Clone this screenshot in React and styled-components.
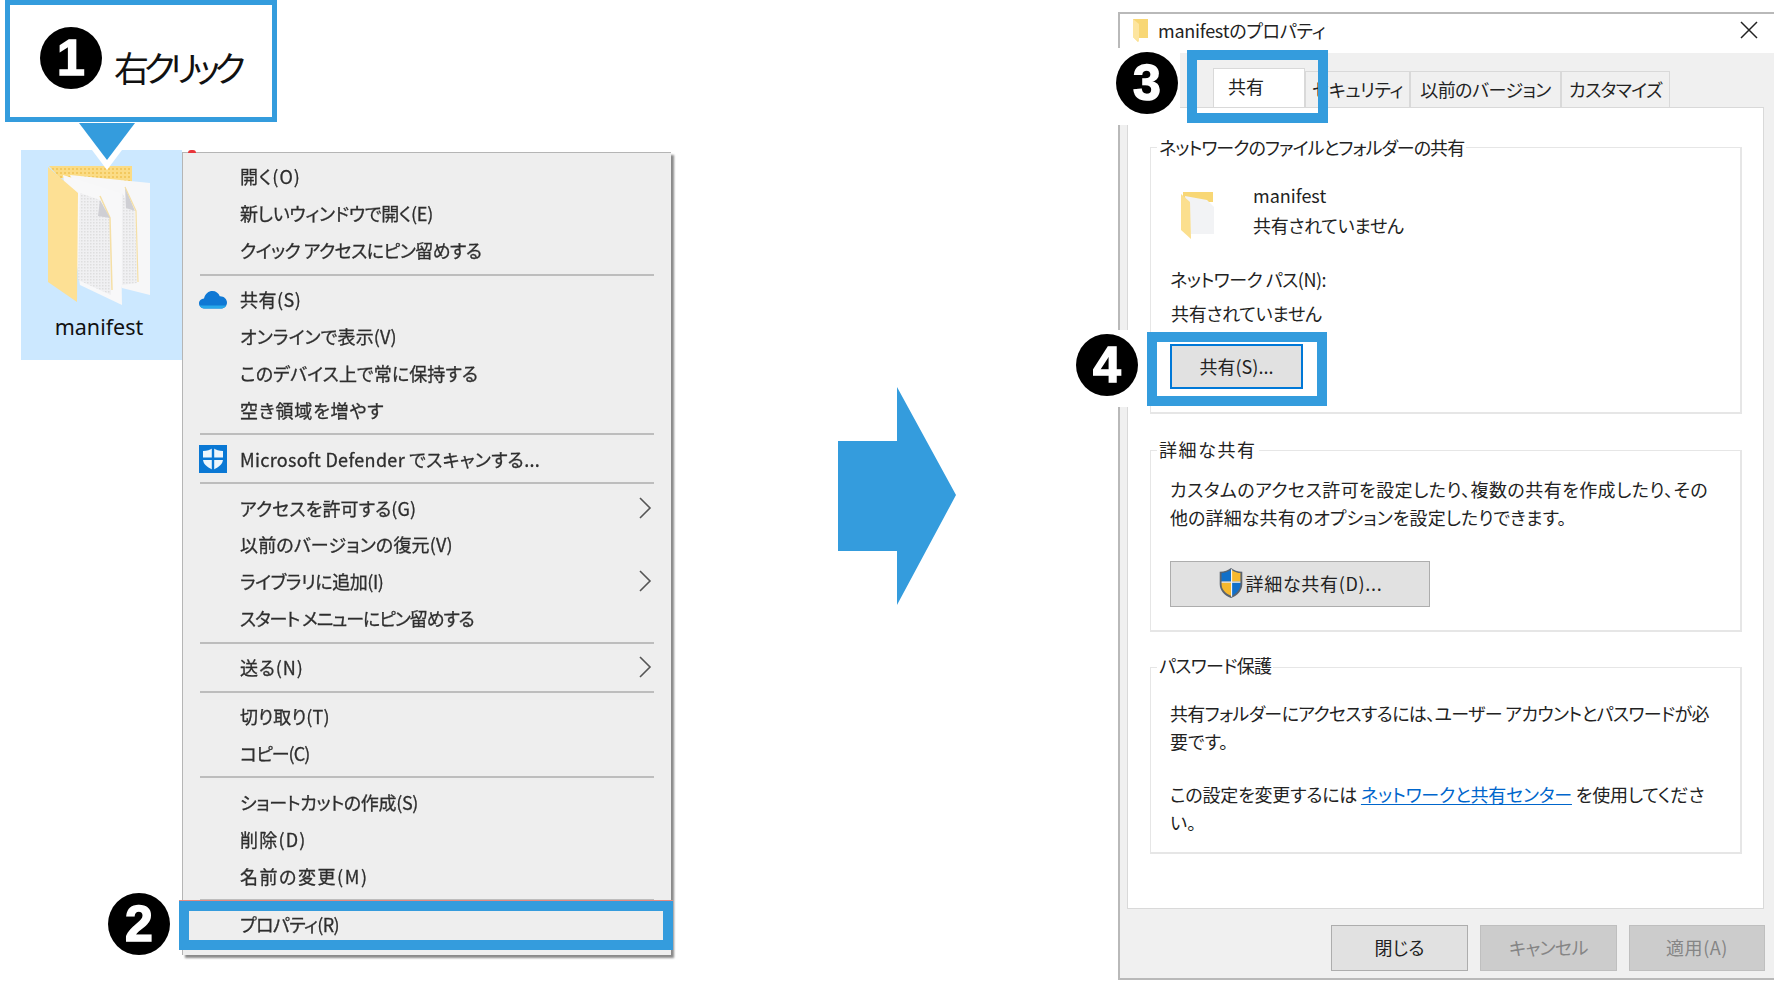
import React from "react";
import styled, { createGlobalStyle } from "styled-components";

const BLUE = "#349cdd";
const FONT = `"Noto Sans CJK JP", "Noto Sans", sans-serif`;

const Global = createGlobalStyle`
  html, body { margin: 0; padding: 0; background: #fff; }
  body { font-family: ${FONT}; font-feature-settings: "palt"; overflow: hidden; }
`;

const Page = styled.div`
  display: flex;
  align-items: flex-start;
  width: 1774px;
  height: 1004px;
  background: #fff;
  overflow: hidden;
`;
const LeftPanel = styled.section`
  position: relative;
  width: 838px;
  flex: none;
`;
const Callout = styled.div`
  box-sizing: border-box;
  display: flex;
  align-items: flex-start;
  margin-left: 5px;
  width: 272px;
  height: 122px;
  border: 5px solid ${BLUE};
  background: #fff;
`;
const CalloutText = styled.span`
  margin: 37px 0 0 104px;
  font-size: 35px;
  line-height: 50px;
  letter-spacing: -5.6px;
  color: #111;
  white-space: nowrap;
`;
const Badge = styled.div`
  position: absolute;
  left: ${(p) => p.$x}px;
  top: ${(p) => p.$y}px;
  z-index: 6;
  display: flex;
  align-items: center;
  justify-content: center;
  width: 62px;
  height: 62px;
  border-radius: 50%;
  background: #000;
  color: #fff;
  font: 700 50px/1 "Liberation Sans", Arial, sans-serif;
  -webkit-text-stroke: 1.5px #fff;
`;
const Pointer = styled.svg`
  position: absolute;
  left: 71px;
  top: 122px;
  z-index: 4;
`;
const Explorer = styled.div`
  display: flex;
  align-items: flex-start;
  margin: 28px 0 0 21px;
`;
const Tile = styled.div`
  position: relative;
  flex: none;
  box-sizing: border-box;
  width: 161px;
  height: 210px;
  background: #cce8ff;
`;
const TileIcon = styled.svg`
  display: block;
`;
const TileLabel = styled.div`
  margin-top: 2px;
  padding-right: 5px;
  text-align: center;
  font: 400 21.5px/30px "Noto Sans", sans-serif;
  color: #111;
`;
const Menu = styled.nav`
  position: relative;
  box-sizing: border-box;
  flex: none;
  width: 489px;
  height: 803px;
  margin-top: 2px;
  padding: 5px 0 0;
  background: #eee;
  border-top: 1px solid #b5b5b5;
  border-left: 1px solid #b5b5b5;
  box-shadow: 3px 3px 2px #8a8a8a;
`;
const RedDot = styled.i`
  position: absolute;
  left: 5px;
  top: -3px;
  width: 8px;
  height: 3px;
  border-radius: 4px 4px 0 0;
  background: #e8343a;
`;
const Row = styled.div`
  display: flex;
  align-items: center;
  height: 36.9px;
  padding-left: 16px;
  padding-right: 19px;
`;
const IconSlot = styled.span`
  display: flex;
  align-items: center;
  flex: none;
  width: 41px;
`;
const RowText = styled.span`
  font-size: 18px;
  letter-spacing: ${(p) => p.$ls}px;
  color: #2e2e2e;
  white-space: nowrap;
  filter: blur(0.55px);
  -webkit-text-stroke: 0.3px #2e2e2e;
`;
const Chevron = styled.svg`
  margin-left: auto;
  filter: blur(0.3px);
`;
const Sep = styled.div`
  height: 2px;
  margin: 5px 17px 5px 17px;
  background: #bdbdbd;
`;
const MenuFrame = styled.div`
  position: absolute;
  left: -4px;
  top: 748px;
  z-index: 5;
  box-sizing: border-box;
  width: 494px;
  height: 49px;
  border: 10px solid ${BLUE};
  box-shadow: 0 -1px 0 #e58a80;
`;
const BigArrow = styled.svg`
  flex: none;
  margin-top: 387px;
`;
const Dialog = styled.section`
  position: relative;
  flex: none;
  box-sizing: border-box;
  display: flex;
  flex-direction: column;
  width: 656px;
  height: 968px;
  margin: 12px 0 0 162px;
  border: 2px solid #b9b9b9;
  border-right: 0;
  background: #f0f0f0;
`;
const TitleBar = styled.header`
  display: flex;
  align-items: center;
  flex: none;
  box-sizing: border-box;
  height: 39px;
  padding: 0 16px 7px 12px;
  background: #fff;
`;
const TitleText = styled.span`
  margin-left: 8px;
  font-size: 18px;
  letter-spacing: -0.25px;
  color: #222;
  white-space: nowrap;
`;
const CloseIcon = styled.svg`
  margin-left: auto;
`;
const Tabs = styled.div`
  display: flex;
  align-items: flex-end;
  flex: none;
  height: 54px;
  padding-left: 93px;
`;
const Tab = styled.div`
  box-sizing: border-box;
  display: flex;
  align-items: flex-start;
  justify-content: ${(p) => (p.$active ? "flex-start" : "center")};
  width: ${(p) => p.$w}px;
  height: ${(p) => (p.$active ? 39 : 36)}px;
  padding-top: 4px;
  padding-left: ${(p) => (p.$active ? 14 : 0)}px;
  background: ${(p) => (p.$active ? "#fff" : "#f0f0f0")};
  border: 1px solid #d9d9d9;
  border-bottom: 0;
  font-size: 18px;
  line-height: 26px;
  letter-spacing: ${(p) => p.$ls ?? 0}px;
  color: #222;
  white-space: nowrap;
`;
const Panel = styled.div`
  box-sizing: border-box;
  display: flex;
  flex-direction: column;
  gap: 35.5px;
  flex: none;
  width: 637px;
  height: 802px;
  margin-left: 7px;
  padding: 39px 21px 0 22px;
  background: #fff;
  border: 1px solid #d9d9d9;
`;
const Group = styled.div`
  position: relative;
  box-sizing: border-box;
  flex: none;
  width: 592px;
  height: ${(p) => p.$h}px;
  padding: ${(p) => p.$top}px 0 0 19px;
  border: 2px solid #e6e6e6;
  border-width: 1px 2px 2px 1px;
`;
const Legend = styled.div`
  position: absolute;
  left: 6px;
  top: ${(p) => p.$y}px;
  padding: 0 2px;
  background: #fff;
  font-size: 18px;
  line-height: 26px;
  letter-spacing: ${(p) => p.$ls}px;
  color: #222;
  white-space: nowrap;
`;
const ShareInfo = styled.div`
  display: flex;
  align-items: flex-start;
`;
const SmallFolder = styled.svg`
  flex: none;
  margin: 12px 38px 0 11px;
`;
const Line = styled.div`
  font-size: 18px;
  line-height: ${(p) => p.$lh ?? 30}px;
  letter-spacing: ${(p) => p.$ls ?? 0}px;
  margin-top: ${(p) => p.$mt ?? 0}px;
  margin-left: ${(p) => p.$ml ?? 0}px;
  color: #222;
  white-space: nowrap;
`;
const Link = styled.a`
  color: #0066cc;
  text-decoration: underline;
  text-underline-offset: 2px;
`;
const WinButton = styled.button`
  display: flex;
  align-items: center;
  justify-content: center;
  box-sizing: border-box;
  width: ${(p) => p.$w}px;
  height: ${(p) => p.$h ?? 45}px;
  margin-top: ${(p) => p.$mt ?? 0}px;
  padding: 0 0 2px;
  background: ${(p) => (p.$disabled ? "#ccc" : "#e1e1e1")};
  border: ${(p) => (p.$focus ? "2px solid #0078d7" : p.$disabled ? "1px solid #bfbfbf" : "1px solid #adadad")};
  color: ${(p) => (p.$disabled ? "#858585" : "#222")};
  font-family: ${FONT};
  font-feature-settings: "palt";
  font-size: 18px;
  letter-spacing: ${(p) => p.$ls ?? 0}px;
`;
const Footer = styled.footer`
  display: flex;
  justify-content: flex-end;
  gap: 12px;
  padding: 16px 9px 0 0;
`;
const Frame = styled.div`
  position: absolute;
  left: ${(p) => p.$x}px;
  top: ${(p) => p.$y}px;
  z-index: 5;
  box-sizing: border-box;
  width: ${(p) => p.$w}px;
  height: ${(p) => p.$h}px;
  border: 10px solid ${BLUE};
`;
const Mask = styled.div`
  position: absolute;
  left: -2px;
  top: ${(p) => p.$y}px;
  z-index: 4;
  width: ${(p) => p.$w}px;
  height: ${(p) => p.$h}px;
  background: #fff;
`;

const LargeFolder = () => (
  <TileIcon width="161" height="160" viewBox="21 150 161 160">
    <defs>
      <pattern id="dots" width="3" height="3" patternUnits="userSpaceOnUse">
        <rect width="3" height="3" fill="#f0f0f2" />
        <rect width="1.5" height="1.5" fill="#dededf" />
      </pattern>
      <pattern id="ydots" width="4" height="4" patternUnits="userSpaceOnUse">
        <rect width="4" height="4" fill="#fbdc86" />
        <rect width="2" height="2" fill="#f3c95f" />
      </pattern>
    </defs>
    <polygon points="49,166 132,166 132,183 60,178" fill="url(#ydots)" />
    <polygon points="70,175 150,183 150,295 122,288" fill="#f7f7f8" />
    <polygon points="122,193 128,203 135,212 137,283 122,285" fill="url(#dots)" />
    <polygon points="63,175 120,193 122,305 80,285" fill="#f8f8f9" />
    <polygon points="80,193 100,200 110,218 111,295 78,280" fill="url(#dots)" />
    <polyline points="100,196 110,218 112,290" fill="none" stroke="#f5dfa5" strokeWidth="1.5" />
    <polygon points="100,200 110,218 98,216" fill="#cfcfd4" />
    <polygon points="125,187 135,211 126,208" fill="#cfcfd4" />
    <polyline points="125,187 136,211 138,282" fill="none" stroke="#f5dfa5" strokeWidth="1.2" />
    <polygon points="48,167 78,193 77,302 48,282" fill="#fde094" />
  </TileIcon>
);

const Cloud = () => (
  <svg width="28" height="19" viewBox="0 0 28 19">
    <path d="M6 18.5C2.5 18.5 0 16.2 0 13.4 0 10.6 2.2 8.6 5 8.4 6.2 3.6 9.6 1 13.4 1c3.4 0 6.2 2 7.4 5.2 4-.2 7.2 2.8 7.2 6.3 0 3.4-2.6 6-6 6z" fill="#0f78d4" />
    <path d="M6 18.5C3.5 18.5 1.5 17.3.6 15.5h26.6c-1 1.9-3 3-5.2 3z" fill="#28a8ea" />
  </svg>
);
const Defender = () => (
  <svg width="28" height="28" viewBox="0 0 28 28">
    <rect width="28" height="28" fill="#0a78d4" />
    <path d="M14 3c3 2 6 3 10 3v8c0 5-4 8-10 11C8 22 4 19 4 14V6c4 0 7-1 10-3z" fill="#eef6fc" />
    <path d="M12.8 3h2.4v23h-2.4zM4 12.5h20v2.4H4z" fill="#0a78d4" />
  </svg>
);
const Shield = () => (
  <svg width="26" height="32" viewBox="0 0 26 34" style={{ marginRight: 2 }}>
    <path d="M13 1c3 2.5 7 4 12 4v13c0 7-5 12-12 15C6 30 1 25 1 18V5c5 0 9-1.5 12-4z" fill="#5b6470" />
    <path d="M13 3v12.5H3V6.5c4 0 7-1.500 10-3.500z" fill="#1270c9" />
    <path d="M14 3.5c3 2 6 3 9 3v9H14z" fill="#f6b82e" />
    <path d="M3 16.5h10v14C7 28 3 24 3 18z" fill="#f6b82e" />
    <path d="M14 16.5h9V18c0 6-4 10-9 12.500z" fill="#1270c9" />
    <path d="M13 2.5h1.2v29H13zM3 15.5h20v1.2H3z" fill="#f5f5f5" />
  </svg>
);

const rows = [
  [{ t: "開く(O)", ls: 1.0 }, { t: "新しいウィンドウで開く(E)", ls: -0.25 }, { t: "クイック アクセスにピン留めする", ls: -0.55 }],
  [
    { t: "共有(S)", icon: <Cloud />, ls: 0.5 },
    { t: "オンラインで表示(V)", ls: 0.15 },
    { t: "このデバイス上で常に保持する", ls: 0.1 },
    { t: "空き領域を増やす", ls: 0.85 },
  ],
  [{ t: "Microsoft Defender でスキャンする...", icon: <Defender />, ls: 0.3 }],
  [
    { t: "アクセスを許可する(G)", more: true, ls: 0.1 },
    { t: "以前のバージョンの復元(V)", ls: 0.15 },
    { t: "ライブラリに追加(I)", more: true, ls: -0.45 },
    { t: "スタート メニューにピン留めする", ls: -1.1 },
  ],
  [{ t: "送る(N)", more: true, ls: 0.85 }],
  [{ t: "切り取り(T)", ls: 0.1 }, { t: "コピー(C)", ls: -1.0 }],
  [{ t: "ショートカットの作成(S)", ls: -0.35 }, { t: "削除(D)", ls: 1.2 }, { t: "名前の変更(M)", ls: 1.55 }],
  [{ t: "プロパティ(R)", ls: -0.6 }],
];

export default function App() {
  return (
    <Page>
      <Global />
      <LeftPanel>
        <Callout>
          <CalloutText>右クリック</CalloutText>
        </Callout>
        <Badge $x={40} $y={27}>1</Badge>
        <Pointer width="72" height="50" viewBox="71 122 72 50">
          <polygon points="71,122 143,122 107,170" fill="#fff" />
          <polygon points="79,123 135,123 107,160" fill={BLUE} />
        </Pointer>
        <Explorer>
          <Tile>
            <LargeFolder />
            <TileLabel>manifest</TileLabel>
          </Tile>
          <Menu>
            <RedDot />
            {rows.map((group, i) => (
              <React.Fragment key={i}>
                {i > 0 && <Sep />}
                {group.map((r) => (
                  <Row key={r.t}>
                    <IconSlot>{r.icon}</IconSlot>
                    <RowText $ls={r.ls}>{r.t}</RowText>
                    {r.more && (
                      <Chevron width="14" height="24" viewBox="0 0 14 24">
                        <polyline points="2,2 12,12 2,22" fill="none" stroke="#555" strokeWidth="1.6" />
                      </Chevron>
                    )}
                  </Row>
                ))}
              </React.Fragment>
            ))}
            <MenuFrame />
            <Badge $x={-75} $y={740}>2</Badge>
          </Menu>
        </Explorer>
      </LeftPanel>

      <BigArrow width="118" height="218" viewBox="0 0 118 218">
        <polygon points="0,54 59,54 59,0 118,108 59,218 59,164 0,164" fill={BLUE} />
      </BigArrow>

      <Dialog>
        <TitleBar>
          <svg width="18" height="24" viewBox="0 0 18 24">
            <polygon points="1,1 16,1 16,20 6,20 6,24 1,19" fill="#f8d775" />
            <polygon points="1,1 7,6 7,24 1,19" fill="#fde59f" />
          </svg>
          <TitleText>manifestのプロパティ</TitleText>
          <CloseIcon width="18" height="18" viewBox="0 0 18 18">
            <path d="M1 1l16 16M17 1L1 17" stroke="#222" strokeWidth="1.5" fill="none" />
          </CloseIcon>
        </TitleBar>
        <Tabs>
          <Tab $active $w={92}>共有</Tab>
          <Tab $w={105} $ls={-0.4}>セキュリティ</Tab>
          <Tab $w={151} $ls={-0.5}>以前のバージョン</Tab>
          <Tab $w={109} $ls={-0.6}>カスタマイズ</Tab>
        </Tabs>
        <Panel>
          <Group $h={267} $top={32}>
            <Legend $y={-14} $ls={-0.95}>ネットワークのファイルとフォルダーの共有</Legend>
            <ShareInfo>
              <SmallFolder width="34" height="47" viewBox="0 0 34 47">
                <polygon points="2,0 32,0 32,10 2,10" fill="#f8d775" />
                <polygon points="4,4 26,8 33,15 33,42 9,42" fill="#f2f3f5" />
                <polygon points="0,2 9,10 10,47 0,38" fill="#fbdf8e" />
              </SmallFolder>
              <div>
                <Line>manifest</Line>
                <Line $ls={-0.3}>共有されていません</Line>
              </div>
            </ShareInfo>
            <Line $mt={24} $ls={-0.5}>ネットワーク パス(N):</Line>
            <Line $mt={4} $ml={1} $ls={-0.3}>共有されていません</Line>
            <WinButton $focus $w={133} $mt={16}>共有(S)...</WinButton>
          </Group>
          <Group $h={182} $top={24}>
            <Legend $y={-15} $ls={1.6}>詳細な共有</Legend>
            <Line $lh={28} $ls={0.45}>カスタムのアクセス許可を設定したり、複数の共有を作成したり、その</Line>
            <Line $lh={28} $ls={0.1}>他の詳細な共有のオプションを設定したりできます。</Line>
            <WinButton $w={260} $h={46} $mt={30} $ls={0.7}>
              <Shield />
              詳細な共有(D)...
            </WinButton>
          </Group>
          <Group $h={187} $top={32}>
            <Legend $y={-16} $ls={-0.7}>パスワード保護</Legend>
            <Line $lh={27.5} $ls={-0.65}>共有フォルダーにアクセスするには、ユーザー アカウントとパスワードが必</Line>
            <Line $lh={27.5}>要です。</Line>
            <Line $lh={27.5} $mt={26} $ls={-0.2}>
              この設定を変更するには <Link>ネットワークと共有センター</Link> を使用してくださ
            </Line>
            <Line $lh={27.5}>い。</Line>
          </Group>
        </Panel>
        <Footer>
          <WinButton $w={137} $h={46}>閉じる</WinButton>
          <WinButton $disabled $w={137} $h={46} $ls={-0.6}>キャンセル</WinButton>
          <WinButton $disabled $w={136} $h={46} $ls={0.6}>適用(A)</WinButton>
        </Footer>
        <Mask $y={34} $w={62} $h={77} />
        <Mask $y={316} $w={29} $h={77} />
        <Frame $x={67} $y={36} $w={141} $h={73} />
        <Frame $x={27} $y={318} $w={180} $h={74} />
        <Badge $x={-4} $y={38}>3</Badge>
        <Badge $x={-44} $y={320}>4</Badge>
      </Dialog>
    </Page>
  );
}
